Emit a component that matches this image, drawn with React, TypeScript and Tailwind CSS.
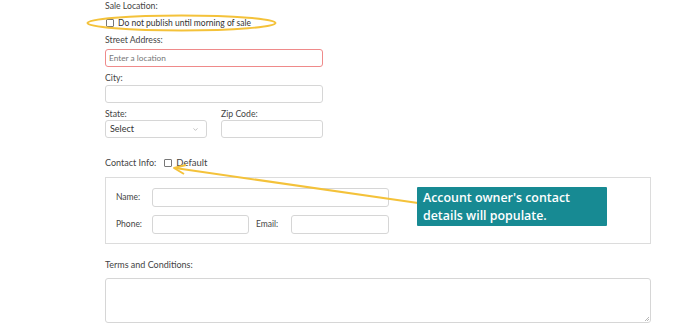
import { ChevronDown } from 'lucide-react'

const font = { fontFamily: 'Lato, "Noto Sans", sans-serif' }

function Label({ children, className = '' }: { children: React.ReactNode; className?: string }) {
  return <div className={`h-[11px] text-[8.7px] leading-[11px] text-[#444] ${className}`}>{children}</div>
}

function Box({ className = '' }: { className?: string }) {
  return <div className={`rounded-[3px] border border-[#d6d6d6] bg-white ${className}`} />
}

function Check() {
  return <span className="inline-block h-[8px] w-[8px] rounded-[1px] border border-[#777] bg-white" />
}

export default function App() {
  return (
    <div className="relative h-[334px] w-[688px] overflow-hidden bg-white" style={font}>
      <div className="ml-[105px] flex w-[546px] flex-col">
        <Label>Sale Location:</Label>
        <div className="mt-[6px] flex h-[12px] items-center text-[8.5px] text-[#333]">
          <span className="ml-[1px] mr-[4px] flex">
            <Check />
          </span>
          <span>Do not publish until morning of sale</span>
        </div>
        <Label className="mt-[5px]">Street Address:</Label>
        <div className="mt-[4px] flex h-[18px] w-[218px] items-center rounded-[3px] border border-[#ef8a8a] px-[3px] text-[8.3px] text-[#777]">
          Enter a location
        </div>
        <Label className="mt-[5px]">City:</Label>
        <Box className="mt-[2px] h-[18px] w-[218px]" />
        <div className="mt-[5px] flex gap-[14px]">
          <div className="flex w-[102px] flex-col">
            <Label>State:</Label>
            <div className="mt-[1px] flex h-[18px] items-center justify-between rounded-[3px] border border-[#d6d6d6] pl-[4px] pr-[7px] text-[9px] text-[#333]">
              <span>Select</span>
              <ChevronDown size={7} strokeWidth={1.5} className="text-[#777]" />
            </div>
          </div>
          <div className="flex w-[102px] flex-col">
            <Label>Zip Code:</Label>
            <Box className="mt-[1px] h-[18px]" />
          </div>
        </div>
        <div className="mt-[19px] flex h-[12px] items-center text-[9px] text-[#444]">
          <span>Contact Info:</span>
          <span className="ml-[8px] mr-[4px] flex">
            <Check />
          </span>
          <span className="text-[9.5px]">Default</span>
        </div>
        <div className="mt-[8px] flex h-[67px] flex-col gap-[8px] border border-[#dcdcdc] pl-[10px] pt-[10px]">
          <div className="flex items-center">
            <span className="w-[36px] text-[8.5px] text-[#444]">Name:</span>
            <Box className="h-[19px] w-[237px]" />
          </div>
          <div className="flex items-center">
            <span className="w-[36px] text-[8.5px] text-[#444]">Phone:</span>
            <Box className="h-[19px] w-[97px]" />
            <span className="ml-[7px] w-[35px] text-[8.5px] text-[#444]">Email:</span>
            <Box className="h-[19px] w-[98px]" />
          </div>
        </div>
        <Label className="mt-[15px] text-[9px]">Terms and Conditions:</Label>
        <div className="relative mt-[8px] h-[45px] rounded-[3px] border border-[#d6d6d6]">
          <svg className="absolute bottom-[1px] right-[1px]" width="5" height="5" viewBox="0 0 5 5">
            <path d="M1 5L5 1M3 5L5 3" stroke="#999" strokeWidth="0.7" />
          </svg>
        </div>
      </div>

      {/* annotation overlay */}
      <svg className="pointer-events-none absolute left-0 top-0" width="688" height="334">
        <ellipse cx="181.5" cy="23" rx="94" ry="7.5" fill="none" stroke="#f4c23a" strokeWidth="2" />
        <line x1="418" y1="203" x2="175" y2="168" stroke="#f4c23a" strokeWidth="2" />
        <path d="M186 165L174 168L184 174" fill="none" stroke="#f4c23a" strokeWidth="2" strokeLinejoin="round" />
      </svg>
      <div
        className="absolute left-[417px] top-[187px] flex h-[39px] w-[190px] flex-col justify-center rounded-[1px] bg-[#178a93] pl-[6px] text-[12.4px] font-semibold leading-[18px] text-white"
        style={{ fontFamily: '"Open Sans", "Noto Sans", sans-serif' }}
      >
        <span>Account owner's contact</span>
        <span>details will populate.</span>
      </div>
    </div>
  )
}
